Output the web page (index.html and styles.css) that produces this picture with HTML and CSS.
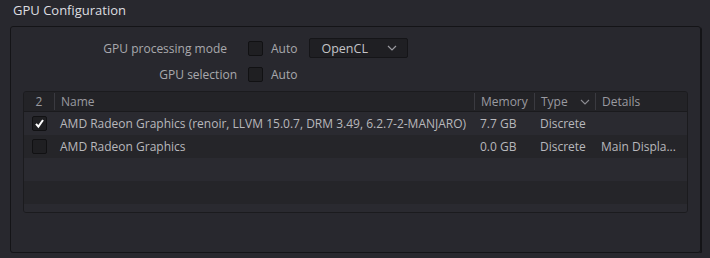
FILE: index.html
```html
<!DOCTYPE html>
<html lang="en">
<head>
    <meta charset="UTF-8">
    <title>GPU Configuration</title>
    <link rel="stylesheet" href="styles.css">
</head>
<body>
    <h1 class="title">GPU Configuration</h1>

    <section class="panel">
        <div class="form">
            <label class="label label-mode">GPU processing mode</label>
            <span class="check"></span>
            <span class="auto">Auto</span>
            <div class="dropdown">
                <span>OpenCL</span>
                <svg class="chevron" width="10" height="6" viewBox="0 0 10 6"><path d="M1 1 L5 5 L9 1" fill="none" stroke="#9a9aa0" stroke-width="1.2"/></svg>
            </div>

            <label class="label">GPU selection</label>
            <span class="check"></span>
            <span class="auto">Auto</span>
        </div>

        <div class="table">
            <div class="row head">
                <div class="cell c-num">2</div>
                <div class="cell c-name">Name</div>
                <div class="cell c-mem">Memory</div>
                <div class="cell c-type">Type
                    <svg class="chevron" width="10" height="6" viewBox="0 0 10 6"><path d="M1 1 L5 5 L9 1" fill="none" stroke="#8a8a90" stroke-width="1.1"/></svg>
                </div>
                <div class="cell c-det">Details</div>
            </div>
            <div class="row">
                <div class="cell c-num">
                    <span class="check checked">
                        <svg width="13" height="13" viewBox="0 0 13 13"><path d="M3 6.8 L5.4 9.6 L10 3" fill="none" stroke="#ffffff" stroke-width="2"/></svg>
                    </span>
                </div>
                <div class="cell c-name">AMD Radeon Graphics (renoir, LLVM 15.0.7, DRM 3.49, 6.2.7-2-MANJARO)</div>
                <div class="cell c-mem">7.7 GB</div>
                <div class="cell c-type">Discrete</div>
                <div class="cell c-det"></div>
            </div>
            <div class="row">
                <div class="cell c-num"><span class="check"></span></div>
                <div class="cell c-name">AMD Radeon Graphics</div>
                <div class="cell c-mem">0.0 GB</div>
                <div class="cell c-type">Discrete</div>
                <div class="cell c-det">Main Displa...</div>
            </div>
            <div class="row"></div>
            <div class="row"></div>
            <div class="row"></div>
        </div>
    </section>
</body>
</html>
```

FILE: styles.css
```css
* {
    margin: 0;
    padding: 0;
    box-sizing: border-box;
}

body {
    font-family: 'Open Sans', 'Noto Sans', sans-serif;
    font-size: 12px;
    background-color: #28282e;
    color: #a8a8ad;
    overflow: hidden;
}

.title {
    font-size: 13px;
    font-weight: normal;
    color: #dedee0;
    height: 26px;
    line-height: 20px;
    padding-left: 13px;
}

.panel {
    margin-left: 10px;
    width: 691px;
    height: 227px;
    border: 1px solid #141417;
    border-radius: 3px;
    box-shadow: 1px 1px 0 #141417;
}

/* form rows above the table */
.form {
    display: grid;
    grid-template-columns: 237px 15px max-content 99px;
    grid-template-rows: 20px 20px;
    justify-content: start;
    row-gap: 6px;
    align-items: center;
    padding-top: 11px;
}

.label {
    justify-self: end;
    margin-right: 11px;
}

.label-mode {
    margin-right: 21px;
}

.auto {
    margin-left: 8px;
    margin-right: 12px;
}

.check {
    display: inline-flex;
    align-items: center;
    justify-content: center;
    width: 15px;
    height: 15px;
    background-color: #1f1f22;
    border: 1px solid #111113;
    border-radius: 2px;
}

.dropdown {
    display: flex;
    align-items: center;
    justify-content: space-between;
    height: 20px;
    padding: 0 10px 0 11px;
    background-color: #1f1f23;
    border: 1px solid #151518;
    border-radius: 2px;
    color: #c4c4c8;
    font-size: 12.5px;
}

/* gpu table */
.table {
    margin: 7px 0 0 12px;
    width: 665px;
    height: 122px;
    border: 1px solid #1b1b1e;
    border-radius: 3px;
    overflow: hidden;
}

.row {
    display: flex;
    height: 23px;
    align-items: center;
    color: #b8b8bc;
}

.row:nth-child(even) {
    background-color: #2a2a30;
}

.row:nth-child(odd) {
    background-color: #252529;
}

.row.head {
    height: 20px;
    background-color: #232327;
    border-bottom: 1px solid #1a1a1d;
    color: #9a9aa0;
}

.cell {
    height: 100%;
    display: flex;
    align-items: center;
    padding-left: 6px;
    white-space: nowrap;
    overflow: hidden;
}

.head .cell + .cell {
    border-left: 1px solid #3a3a40;
}

.head .cell {
    height: 17px;
}

.c-num {
    width: 30px;
    justify-content: center;
    padding-left: 0;
}

.c-name {
    width: 420px;
}

.c-mem {
    width: 60px;
}

.c-type {
    width: 61px;
    justify-content: space-between;
    padding-right: 5px;
}

.c-det {
    width: 92px;
}
```
